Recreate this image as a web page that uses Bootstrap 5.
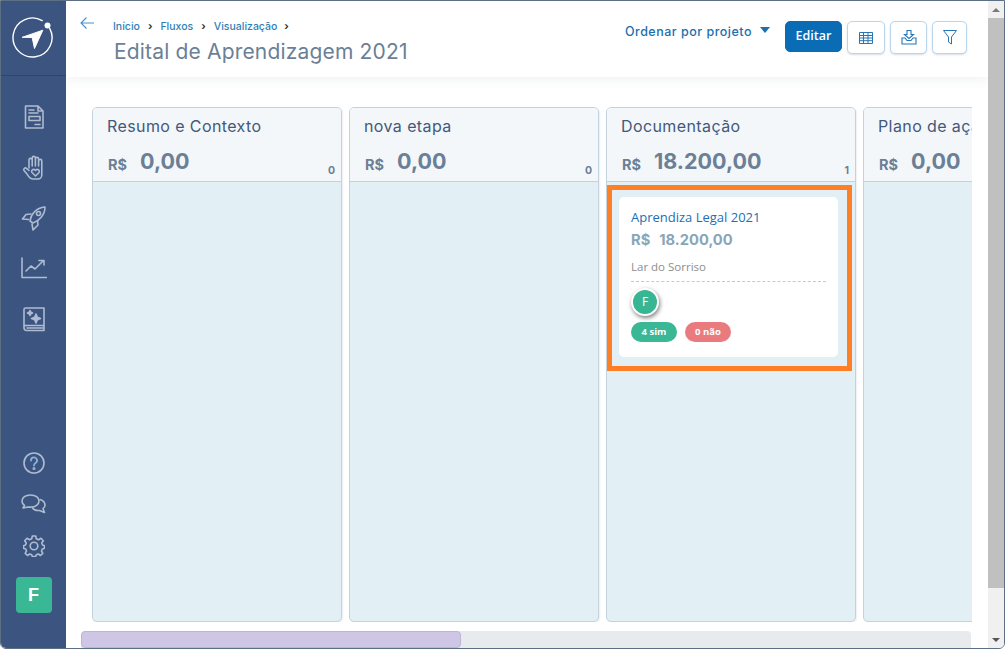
<!DOCTYPE html>
<html lang="pt-BR">
<head>
    <meta charset="utf-8">
    <title>Edital de Aprendizagem 2021</title>
    <link href="https://cdn.jsdelivr.net/npm/bootstrap@5.3.0/dist/css/bootstrap.min.css" rel="stylesheet">
    <style>
        html, body { height: 100%; overflow: hidden; background: #fff; }
        .app-frame { width: 1005px; height: 649px; border: 1px solid #5d6f85; border-radius: 0 0 6px 6px; overflow: hidden; font-family: Inter, sans-serif; }
        .side-bar { width: 65px; background: #3c5580; flex: none; }
        .side-logo { height: 75px; border-bottom: 1px solid #2f4669; }
        .side-icons { padding-top: 28px; gap: 25px; }
        .side-foot { padding-bottom: 35px; gap: 20px; }
        .side-bar svg { fill: none; stroke: #aebbd0; stroke-width: 1.6; stroke-linejoin: round; stroke-linecap: round; display: block; }
        .side-rocket { margin-top: -1px; margin-bottom: 1px; }
        .side-book { margin-top: 2px; }
        .side-chat { margin-bottom: 1px; }
        .user-tile { width: 36px; height: 36px; border-radius: 4px; background: #3ab795; color: #fff; font-weight: 700; font-size: 18px; font-family: "Liberation Sans", sans-serif; }
        .page-top { height: 76px; flex: none; box-shadow: 0 3px 10px rgba(60, 85, 128, .08); padding: 0 21px 0 14px; }
        .back-arrow { margin-top: 15px; margin-right: 19px; stroke: #4a8fd0; fill: none; stroke-width: 1.1; }
        .crumbs { margin: 18px 0 0 0; padding: 0; font-size: 10.5px; font-weight: 500; --bs-breadcrumb-margin-bottom: 0; --bs-breadcrumb-item-padding-x: 8px; }
        .crumbs a { color: #2f7fb8; text-decoration: none; }
        .crumbs .breadcrumb-item + .breadcrumb-item::before { content: "›"; font-weight: 700; color: #333; }
        .crumbs .trail-end::after { content: "›"; font-weight: 700; color: #333; padding-left: 7px; }
        .page-title { font-size: 21px; font-weight: 400; color: #6b7f96; margin: 4px 0 0 1px; letter-spacing: .17px; }
        .sort-link { color: #1a6fb0; font-size: 12.5px; font-weight: 500; margin-right: 15px; padding-top: 3px; letter-spacing: .5px; }
        .sort-caret { width: 0; height: 0; border: 5.5px solid transparent; border-top: 6px solid #1a6fb0; border-bottom: 0; margin: -5px 0 0 8px; }
        .top-tools { padding-top: 20px; gap: 5px; }
        .btn-edit { background: #0a6cb5; border-color: #0a6cb5; color: #fff; font-family: "Open Sans", sans-serif; font-size: 12.5px; font-weight: 600; width: 57px; height: 31px; padding: 0; border-radius: 5px; }
        .btn-tool { width: 38px; height: 33px; padding: 0; background: #fff; border: 1px solid #b9d6ec; border-radius: 5px; box-shadow: 0 1px 2px rgba(60, 85, 128, .2); }
        .btn-tool svg { stroke: #2676b5; fill: none; stroke-width: 1; }
        .btn-tool.narrow { width: 35px; }
        .btn-tool.mid { width: 37px; }
        .board { margin: 30px 16px 0 26px; height: 515px; gap: 7px; overflow: hidden; }
        .stage { width: 250px; flex: none; background: #e2eff4; border: 1px solid #c3d2dc; border-radius: 5px; box-shadow: 1px 1px 2px rgba(60, 85, 128, .1); --bs-card-bg: #e2eff4; }
        .stage-head { height: 74px; background: #f3f7fa; border-bottom: 1px solid #c3d2dc; padding: 8px 5px 0 14px; border-radius: 4px 4px 0 0; }
        .stage-name { font-size: 16px; color: #43597a; white-space: nowrap; letter-spacing: .4px; line-height: 20px; }
        .stage-sum { margin-top: 12px; color: #6b7f96; font-weight: 700; white-space: nowrap; }
        .stage-sum .cur { font-size: 14.5px; margin: 6px 13px 0 1px; }
        .stage-sum .val { font-size: 21.5px; line-height: 26px; }
        .stage-count { font-size: 10.5px; font-weight: 700; color: #6b7f96; margin-bottom: -3px; padding-right: 1px; }
        .mark-box { margin-top: 3px; width: 245px; height: 186px; border: 5px solid #ff7f27; padding: 7px 9px 9px 7px; }
        .deal { height: 160px; border: 0; border-radius: 5px; padding: 12px 12px 0; background: #fff; font-family: "Open Sans", sans-serif; }
        .deal-name { font-size: 13px; color: #1a6fb5; line-height: 17px; }
        .deal-sum { font-family: Inter, sans-serif; font-size: 14.7px; font-weight: 700; color: #8aa5b8; margin-top: 5px; line-height: 18px; }
        .deal-sum span { margin-right: 9px; }
        .deal-org { font-size: 11.5px; color: #8e8e8e; margin-top: 10px; line-height: 16px; padding-bottom: 6px; border-bottom: 1px dashed #c3c9d2; }
        .deal-face { width: 28px; height: 28px; margin-top: 6px; border-radius: 50%; background: #38b592; color: #fff; font-size: 12px; border: 2px solid #fff; box-shadow: 1px 2px 4px rgba(0, 0, 0, .5); }
        .deal-votes { margin-top: 6px; gap: 8px; }
        .vote { width: 46px; height: 20px; border-radius: 10px; font-size: 9.5px; font-weight: 700; color: #fff; }
        .vote.yes { background: #3ab795; }
        .vote.no { background: #e97b7f; }
        .h-track { height: 17px; margin: 9px 17px 0 15px; background: #e7ebee; border-radius: 4px 4px 0 0; }
        .h-thumb { width: 380px; height: 100%; background: #cfc6e6; border: 1px solid #bdb4d8; border-radius: 4px; }
        .v-bar { width: 16px; flex: none; background: #f0f0f0; }
        .v-arrow { height: 17px; }
        .v-thumb { height: 570px; background: #c0c0c0; }
        .tri-up { width: 0; height: 0; border: 4px solid transparent; border-bottom: 4px solid #7a7a7a; border-top: 0; }
        .tri-down { width: 0; height: 0; border: 4px solid transparent; border-top: 4px solid #555; border-bottom: 0; }
    </style>
</head>
<body>
    <div class="app-frame d-flex">
        <!-- Sidebar -->
        <nav class="side-bar d-flex flex-column">
            <div class="side-logo d-flex align-items-center justify-content-center">
                <svg width="44" height="44" viewBox="0 0 44 44" style="stroke:#fff">
                    <path d="M30.200 4.600 A19.500 19.500 0 1 0 37.700 12.300" stroke-width="1.400"/>
                    <circle cx="35.500" cy="9.500" r="3" fill="#fff" stroke="none"/>
                    <path d="M10.500 21.200 L30.800 14.200 L22.500 32.500 L20.200 21.800 Z" fill="#fff" stroke-width="1"/>
                </svg>
            </div>
            <div class="side-icons d-flex flex-column align-items-center">
                <svg width="24" height="26" viewBox="0 0 24 26">
                    <path d="M3.500 2 H16 L21 7 V24 H3.500 Z M16 2 V7 H21"/>
                    <path d="M7 6 H12 M7 9 H16 M13 20.500 H18"/>
                    <rect x="7" y="12.500" width="11" height="4"/>
                </svg>
                <svg width="24" height="26" viewBox="0 0 24 26">
                    <path d="M7 13 V5 a1.600 1.600 0 0 1 3.200 0 V11 M10.200 11 V3 a1.600 1.600 0 0 1 3.200 0 V11 M13.400 11 V4 a1.600 1.600 0 0 1 3.200 0 V11 M16.600 11 V6 a1.600 1.600 0 0 1 3.200 0 V20 a4 4 0 0 1 -4 4 H11 C8 24 7 22 5 19 L2 15.500 a1.700 1.700 0 0 1 2.500 -2.200 L7 15.500"/>
                    <path d="M13.500 21 L10 17.500 a2 2 0 0 1 3 -2.600 l.5 .5 .5 -.5 a2 2 0 0 1 3 2.600 Z"/>
                </svg>
                <svg class="side-rocket" width="26" height="26" viewBox="0 0 26 26">
                    <path d="M9 16 C10 9 15 3 24 2 C24 10 18 16 12 18 Z"/>
                    <circle cx="17.500" cy="8.500" r="2"/>
                    <path d="M10 9 L5 9.500 L1.500 14 L7.500 14.500 M16.500 15.500 L17 20 L12 25 L11 19"/>
                </svg>
                <svg width="26" height="22" viewBox="0 0 26 22">
                    <path d="M1 1 V20.500 H25.500"/>
                    <path d="M5 14 L10 9 L14 12 L22 4 M18 3.500 H23 V8"/>
                </svg>
                <svg class="side-book" width="24" height="26" viewBox="0 0 24 26">
                    <path d="M3.500 2 H22 V19.500 H3.500 C2.500 19.500 2 20.500 2 21.500 V3.500 C2 2.500 2.500 2 3.500 2 Z M2 21.500 C2 23.500 3 24.500 4.500 24.500 H22 V19.500 M5 22 H22"/>
                    <path d="M14 8 l1.300 3.200 L18.500 12.500 l-3.200 1.300 L14 17 l-1.300 -3.200 L9.500 12.500 l3.200 -1.300 Z" fill="#aebbd0"/>
                    <path d="M8 4.500 l.8 1.700 L10.500 7 l-1.700 .8 L8 9.500 l-.8 -1.700 L5.500 7 l1.700 -.8 Z" fill="#aebbd0"/>
                </svg>
            </div>
            <div class="side-foot d-flex flex-column align-items-center mt-auto">
                <svg width="22" height="22" viewBox="0 0 22 22">
                    <circle cx="11" cy="11" r="10"/>
                    <path d="M8 8.500 a3 3 0 1 1 4.500 2.500 c-1 .6 -1.500 1.200 -1.500 2.500" stroke="#8fb0d8" stroke-width="1.800"/>
                    <circle cx="11" cy="16.500" r=".8" stroke="#8fb0d8"/>
                </svg>
                <svg class="side-chat" width="25" height="20" viewBox="0 0 25 20">
                    <path d="M9.500 1 C4.500 1 1 3.500 1 7 C1 9 2 10.500 3.500 11.500 L2 14 L7 13 C8 13.200 9 13.200 10 13 C14.500 13 18 10.500 18 7 C18 3.500 14.500 1 9.500 1 Z"/>
                    <path d="M19 5.500 C22 6.500 24 8.500 24 11 C24 12.500 23.300 13.700 22 14.700 L23.500 18.500 L18.500 16.500 C15.500 16.800 13 16 11.500 14"/>
                </svg>
                <svg width="22" height="22" viewBox="0 0 22 22">
                    <circle cx="11" cy="11" r="3.800"/>
                    <path d="M9.300 1 H12.700 L13.300 3.800 L15.500 4.700 L18 3.200 L20.300 5.700 L18.700 8 L19.500 10 L21.500 10.700 V13.300 L19.300 14 L18.500 16 L19.800 18.300 L17.500 20.500 L15.300 19 L13.300 19.800 L12.700 21.500 H9.300 L8.700 19.800 L6.700 19 L4.500 20.500 L2.200 18.300 L3.500 16 L2.700 14 L.5 13.300 V10.700 L2.500 10 L3.300 8 L1.700 5.700 L4 3.200 L6.500 4.700 L8.700 3.800 Z"/>
                </svg>
                <div class="user-tile d-flex align-items-center justify-content-center">F</div>
            </div>
        </nav>

        <!-- Main -->
        <main class="flex-grow-1 d-flex flex-column" style="min-width:0">
            <header class="page-top d-flex">
                <svg class="back-arrow" width="14" height="14" viewBox="0 0 14 14"><path d="M14 7 H1 M6.500 1.500 L1 7 L6.500 12.500"/></svg>
                <div>
                    <ol class="breadcrumb crumbs">
                        <li class="breadcrumb-item"><a href="#">Início</a></li>
                        <li class="breadcrumb-item"><a href="#">Fluxos</a></li>
                        <li class="breadcrumb-item trail-end"><a href="#">Visualização</a></li>
                    </ol>
                    <h1 class="page-title">Edital de Aprendizagem 2021</h1>
                </div>
                <div class="ms-auto d-flex align-items-start">
                    <div class="sort-link d-flex align-items-center" style="height:60px">Ordenar por projeto<span class="sort-caret"></span></div>
                    <div class="top-tools d-flex align-items-start">
                        <button class="btn btn-edit">Editar</button>
                        <button class="btn btn-tool d-flex align-items-center justify-content-center">
                            <svg width="14" height="12" viewBox="0 0 14 12"><path d="M.5 .5 H13.500 V11.500 H.5 Z M.5 3.500 H13.500 M.5 6 H13.500 M.5 8.700 H13.500 M4.500 .5 V11.500 M9 .5 V11.500"/></svg>
                        </button>
                        <button class="btn btn-tool mid d-flex align-items-center justify-content-center">
                            <svg width="16" height="15" viewBox="0 0 16 15"><path d="M6 .5 H10 V4.500 H12.500 L8 8.500 L3.500 4.500 H6 Z M1 8 H4 L6 10.500 H10 L12 8 H15 V14 H1 Z" stroke-width="1.100"/></svg>
                        </button>
                        <button class="btn btn-tool narrow d-flex align-items-center justify-content-center">
                            <svg width="14" height="15" viewBox="0 0 14 15"><path d="M.5 .5 H13.500 L8.500 7 V14 L5.500 12 V7 Z"/></svg>
                        </button>
                    </div>
                </div>
            </header>

            <div class="board d-flex">
                <section class="card stage">
                    <div class="stage-head">
                        <div class="stage-name">Resumo e Contexto</div>
                        <div class="d-flex justify-content-between">
                            <div class="stage-sum d-flex"><span class="cur">R$</span><span class="val">0,00</span></div>
                            <div class="stage-count mt-auto">0</div>
                        </div>
                    </div>
                </section>
                <section class="card stage">
                    <div class="stage-head">
                        <div class="stage-name">nova etapa</div>
                        <div class="d-flex justify-content-between">
                            <div class="stage-sum d-flex"><span class="cur">R$</span><span class="val">0,00</span></div>
                            <div class="stage-count mt-auto">0</div>
                        </div>
                    </div>
                </section>
                <section class="card stage">
                    <div class="stage-head">
                        <div class="stage-name">Documentação</div>
                        <div class="d-flex justify-content-between">
                            <div class="stage-sum d-flex"><span class="cur">R$</span><span class="val">18.200,00</span></div>
                            <div class="stage-count mt-auto">1</div>
                        </div>
                    </div>
                    <div class="mark-box">
                        <div class="card deal">
                            <div class="deal-name">Aprendiza Legal 2021</div>
                            <div class="deal-sum"><span>R$</span>18.200,00</div>
                            <div class="deal-org">Lar do Sorriso</div>
                            <div class="deal-face d-flex align-items-center justify-content-center">F</div>
                            <div class="deal-votes d-flex">
                                <div class="vote yes d-flex align-items-center justify-content-center">4 sim</div>
                                <div class="vote no d-flex align-items-center justify-content-center">0 não</div>
                            </div>
                        </div>
                    </div>
                </section>
                <section class="card stage">
                    <div class="stage-head">
                        <div class="stage-name">Plano de ação</div>
                        <div class="stage-sum d-flex"><span class="cur">R$</span><span class="val">0,00</span></div>
                    </div>
                </section>
            </div>

            <div class="h-track"><div class="h-thumb"></div></div>
        </main>

        <!-- Browser scrollbar -->
        <div class="v-bar d-flex flex-column">
            <div class="v-arrow d-flex align-items-center justify-content-center"><span class="tri-up"></span></div>
            <div class="v-thumb"></div>
            <div class="v-arrow d-flex align-items-center justify-content-center mt-auto"><span class="tri-down"></span></div>
        </div>
    </div>
    <script src="https://cdn.jsdelivr.net/npm/bootstrap@5.3.0/dist/js/bootstrap.bundle.min.js"></script>
</body>
</html>
